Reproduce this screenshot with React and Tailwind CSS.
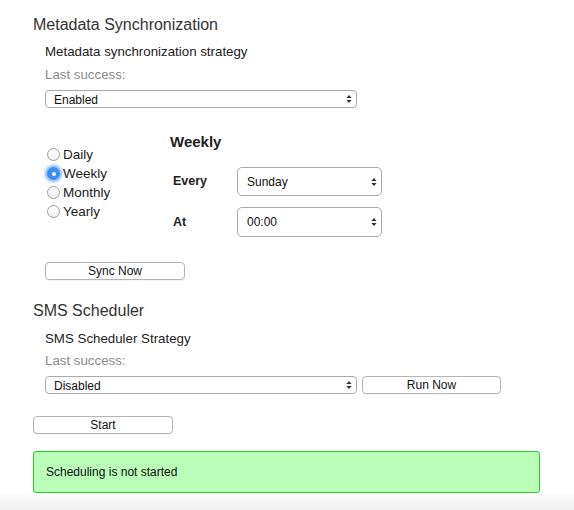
import React, { useState } from 'react';

const font = { fontFamily: '"Liberation Sans", Arial, Helvetica, sans-serif' };

// Mac-style stepper arrows shown at the right of a select
const Arrows = () => (
  <svg width="6" height="9" viewBox="0 0 6 9" className="pointer-events-none absolute right-[5px] top-1/2 -translate-y-1/2">
    <path d="M3 0.5 L5.6 3.6 L0.4 3.6 Z" fill="#333" />
    <path d="M3 8.5 L5.6 5.4 L0.4 5.4 Z" fill="#333" />
  </svg>
);

const Select = ({ value, options, className, tall }) => (
  <div className={`relative ${className}`}>
    <select
      defaultValue={value}
      className={`block w-full h-full appearance-none bg-white border border-[#a9a9a9] text-[12px] text-[#111] outline-none ${
        tall ? 'rounded-[5px] pl-[9px]' : 'rounded-[4px] pl-[8px]'
      }`}
      style={font}
    >
      {options.map((o) => (
        <option key={o}>{o}</option>
      ))}
    </select>
    <Arrows />
  </div>
);

const Button = ({ children, className }) => (
  <button
    className={`block h-[18px] bg-white border border-[#b4b4b4] rounded-[4px] text-[12px] leading-none text-[#111] shadow-[0_1px_0_rgba(0,0,0,0.04)] ${className}`}
    style={font}
  >
    {children}
  </button>
);

const Radio = ({ label, checked, onClick }) => (
  <div className="flex items-center h-[19px] cursor-pointer" onClick={onClick}>
    {checked ? (
      <span className="ml-[2px] w-[13px] h-[13px] rounded-full bg-[#3d8ff6] flex items-center justify-center shadow-[0_0_0_2px_rgba(120,175,250,0.55),0_0_3px_3px_rgba(120,175,250,0.35)]">
        <span className="w-[4px] h-[4px] rounded-full bg-white" />
      </span>
    ) : (
      <span className="ml-[2px] w-[13px] h-[13px] rounded-full border border-[#9c9c9c] bg-[linear-gradient(#ffffff,#f1f1f1)]" />
    )}
    <span className="ml-[3px] text-[13.5px] text-[#222] leading-[19px]">{label}</span>
  </div>
);

export default function App() {
  const [freq, setFreq] = useState('Weekly');

  return (
    <div
      className="h-[510px] pl-[33px] pt-[15px] text-[#222] bg-[linear-gradient(to_bottom,#ffffff_0px,#ffffff_491px,#efefef_510px)]"
      style={font}
    >
      <h2 className="text-[16px] leading-[20px] text-[#333]">Metadata Synchronization</h2>

      <div className="pl-[12px]">
        <div className="mt-[8px] text-[13.3px] leading-[18px] text-[#222]">Metadata synchronization strategy</div>
        <div className="mt-[5px] text-[13.3px] leading-[18px] text-[#8a8a8a]">Last success:</div>
        <Select value="Enabled" options={['Enabled', 'Disabled']} className="mt-[6px] w-[312px] h-[18px]" />

        <div className="mt-[25px] flex">
          <div className="w-[125px] pt-[12px] flex flex-col">
            {['Daily', 'Weekly', 'Monthly', 'Yearly'].map((f) => (
              <Radio key={f} label={f} checked={freq === f} onClick={() => setFreq(f)} />
            ))}
          </div>
          <div className="flex flex-col">
            <div className="text-[15px] font-bold leading-[18px] text-[#222]">Weekly</div>
            <div className="mt-[16px] flex items-center">
              <span className="w-[67px] pl-[3px] text-[12.5px] font-bold text-[#222]">Every</span>
              <Select
                tall
                value="Sunday"
                options={['Sunday', 'Monday', 'Tuesday', 'Wednesday', 'Thursday', 'Friday', 'Saturday']}
                className="w-[145px] h-[29px]"
              />
            </div>
            <div className="mt-[11px] flex items-center">
              <span className="w-[67px] pl-[3px] text-[12.5px] font-bold text-[#222]">At</span>
              <Select tall value="00:00" options={['00:00', '01:00', '02:00', '03:00']} className="w-[145px] h-[30px]" />
            </div>
          </div>
        </div>

        <Button className="mt-[25px] w-[140px]">Sync Now</Button>
      </div>

      <h2 className="mt-[21px] text-[16px] leading-[20px] text-[#333]">SMS Scheduler</h2>

      <div className="pl-[12px]">
        <div className="mt-[9px] text-[13.3px] leading-[18px] text-[#222]">SMS Scheduler Strategy</div>
        <div className="mt-[4px] text-[13.3px] leading-[18px] text-[#8a8a8a]">Last success:</div>
        <div className="mt-[6px] flex items-center gap-[5px]">
          <Select value="Disabled" options={['Enabled', 'Disabled']} className="w-[312px] h-[18px]" />
          <Button className="w-[139px]">Run Now</Button>
        </div>
      </div>

      <Button className="mt-[22px] w-[140px]">Start</Button>

      <div className="mt-[17px] w-[507px] h-[42px] flex items-center pl-[12px] rounded-[3px] border border-[#27cc27] bg-[#b9fdb9]">
        <span className="text-[12px] text-[#111]">Scheduling is not started</span>
      </div>
    </div>
  );
}
